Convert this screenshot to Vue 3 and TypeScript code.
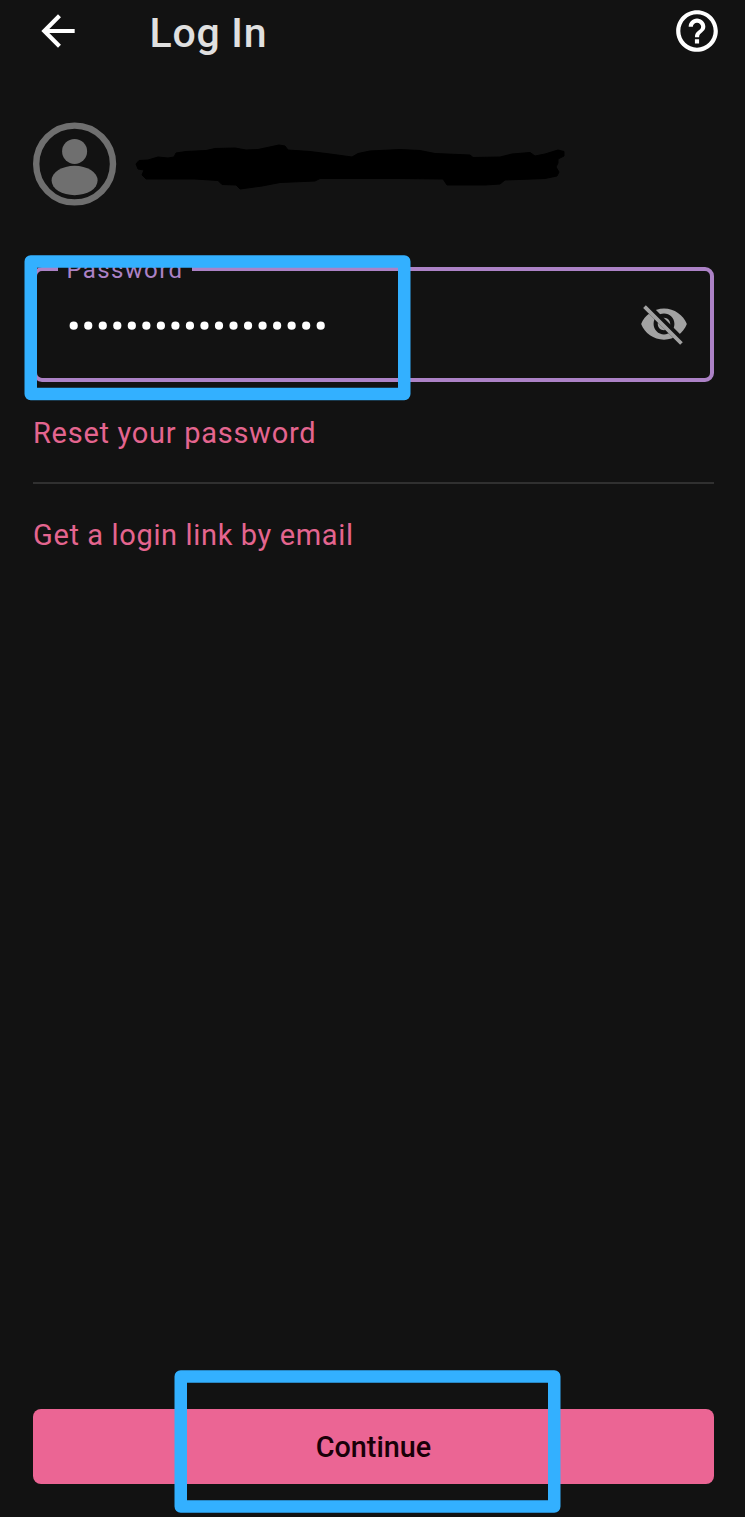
<script setup lang="ts">
const passwordLength = 18
const dotPitch = 14.53
</script>

<template>
  <div class="screen">
    <header class="bar">
      <svg class="icon" viewBox="0 0 24 24"><path fill="#fff" d="M20 11H7.83l5.59-5.59L12 4l-8 8 8 8 1.41-1.41L7.83 13H20v-2z" /></svg>
      <h1 class="title">Log In</h1>
      <svg class="icon" viewBox="0 0 24 24"><path fill="#fff" d="M11 18h2v-2h-2v2zm1-16C6.48 2 2 6.48 2 12s4.48 10 10 10 10-4.48 10-10S17.52 2 12 2zm0 18c-4.41 0-8-3.59-8-8s3.59-8 8-8 8 3.59 8 8-3.59 8-8 8zm0-14c-2.21 0-4 1.79-4 4h2c0-1.1.9-2 2-2s2 .9 2 2c0 2-3 1.75-3 5h2c0-2.25 3-2.5 3-5 0-2.21-1.79-4-4-4z" /></svg>
    </header>

    <main class="content">
      <section class="account">
        <svg class="avatar" viewBox="0 0 84 84">
          <circle cx="41.6" cy="42" r="38.4" fill="none" stroke="#6f6f6f" stroke-width="6.4" />
          <circle cx="41.6" cy="29.4" r="12.5" fill="#6f6f6f" />
          <ellipse cx="41.6" cy="58.5" rx="23" ry="14.7" fill="#6f6f6f" />
        </svg>
        <svg class="scribble" viewBox="130 140 440 54">
          <path stroke="#000" stroke-width="1" stroke-linejoin="round" d="M136 164L139 160.500L148 160L158 157L168 158L174 157L176 153L186 151.500L206 150.500L215 148.500L235 148L246 150L258 149.500L265 148L279 145L285 146L288 150L310 151.500L330 154L352 157L358 153.500L370 151L400 149.500L420 150.500L435 153.500L470 155L473 157.500L500 157L512 154L530 152.500L535 156L545 154L558 150L564 151.500L564 156L558 159L558 163L556 167L559 172L557 176L545 178.500L505 180L500 184L485 185L447 185L443 179L400 178.500L320 178.500L315 181L280 182.500L262 186L240 189L236 185L222 184.500L218 180.500L195 179L146 179L142 175L144 170L138 169Z" />
        </svg>
      </section>

      <section class="field">
        <span class="label">Password</span>
        <svg class="dots" viewBox="0 0 260 10">
          <circle v-for="n in passwordLength" :key="n" :cx="4.7 + (n - 1) * dotPitch" cy="4.7" r="4.1" fill="#fff" />
        </svg>
        <svg class="icon eye" viewBox="0 0 24 24">
          <defs>
            <clipPath id="strike-mask"><path d="M2 4.270L19.730 22L22.270 19.460L4.540 1.730V1H23V23H1V4.270Z" /></clipPath>
          </defs>
          <path clip-path="url(#strike-mask)" fill="#a2a2a2" d="M12 4.500C7 4.500 2.730 7.610 1 12c1.730 4.390 6 7.500 11 7.500s9.270-3.110 11-7.500c-1.730-4.390-6-7.500-11-7.500zM12 17c-2.760 0-5-2.240-5-5s2.240-5 5-5 5 2.240 5 5-2.240 5-5 5zM12 9c-1.660 0-3 1.340-3 3s1.340 3 3 3 3-1.340 3-3-1.340-3-3-3z" />
          <path fill="none" stroke="#a2a2a2" stroke-width="1.8" stroke-linecap="square" d="M3.270 4.270L19.740 20.740" />
        </svg>
      </section>

      <a class="link reset">Reset your password</a>
      <hr class="divider" />
      <a class="link email">Get a login link by email</a>
    </main>

    <button class="continue">Continue</button>

    <svg class="mark mark-password" viewBox="0 0 388 147">
      <rect x="6.75" y="6.5" width="373.500" height="132.500" />
    </svg>
    <svg class="mark mark-continue" viewBox="0 0 388 147">
      <rect x="6.75" y="6.5" width="373.500" height="130" />
    </svg>
  </div>
</template>

<style>
html,
body {
  margin: 0;
  background: #121212;
}
</style>

<style scoped>
.screen {
  position: relative;
  box-sizing: border-box;
  width: 745px;
  height: 1517px;
  padding: 0 31px 33px 33px;
  display: flex;
  flex-direction: column;
  overflow: hidden;
  background: #121212;
  font-family: Roboto, sans-serif;
}
.bar {
  display: flex;
  align-items: center;
  height: 62px;
  margin-right: -8px;
}
.icon {
  display: block;
  flex: none;
  width: 50px;
  height: 50px;
}
.title {
  flex: 1;
  margin: 4px 0 0 66.500px;
  font-size: 41px;
  line-height: 48px;
  font-weight: 500;
  letter-spacing: 0.750px;
  color: #e0e0e0;
}
.content {
  flex: 1;
  display: flex;
  flex-direction: column;
  align-items: flex-start;
}
.account {
  display: flex;
  align-items: center;
  height: 84px;
  margin-top: 60px;
}
.avatar {
  width: 84px;
  height: 84px;
}
.scribble {
  width: 440px;
  height: 54px;
  margin: 6px 0 0 13px;
}
.field {
  position: relative;
  box-sizing: border-box;
  display: flex;
  align-items: center;
  justify-content: space-between;
  width: 681px;
  height: 115px;
  margin-top: 61px;
  padding: 0 21px 1px 32px;
  border: 4px solid #ac82c6;
  border-radius: 9px;
}
.label {
  position: absolute;
  left: 21px;
  top: -15px;
  box-sizing: border-box;
  width: 134px;
  padding-left: 8.500px;
  background: #121212;
  font-size: 24px;
  line-height: 28px;
  letter-spacing: 1.350px;
  color: #ac82c6;
}
.dots {
  width: 260px;
  height: 10px;
  margin-top: 4px;
}
.link {
  font-size: 29px;
  line-height: 34px;
  letter-spacing: 0.720px;
  color: #e4658f;
}
.reset {
  margin-top: 34px;
}
.divider {
  width: 681px;
  height: 2px;
  margin: 32px 0 0;
  border: 0;
  background: #303030;
}
.email {
  margin-top: 34px;
  letter-spacing: 0.640px;
}
.continue {
  height: 75px;
  padding: 1px 0 0;
  border: 0;
  border-radius: 8px;
  background: #eb6594;
  font-family: inherit;
  font-size: 28.800px;
  font-weight: 500;
  color: #190008;
}
.mark {
  position: absolute;
  width: 388px;
  height: 147px;
  fill: none;
  stroke: #33b0ff;
  stroke-width: 12.500px;
  stroke-linejoin: round;
}
.mark-password {
  left: 24px;
  top: 255px;
}
.mark-continue {
  left: 174px;
  top: 1370px;
}
</style>
